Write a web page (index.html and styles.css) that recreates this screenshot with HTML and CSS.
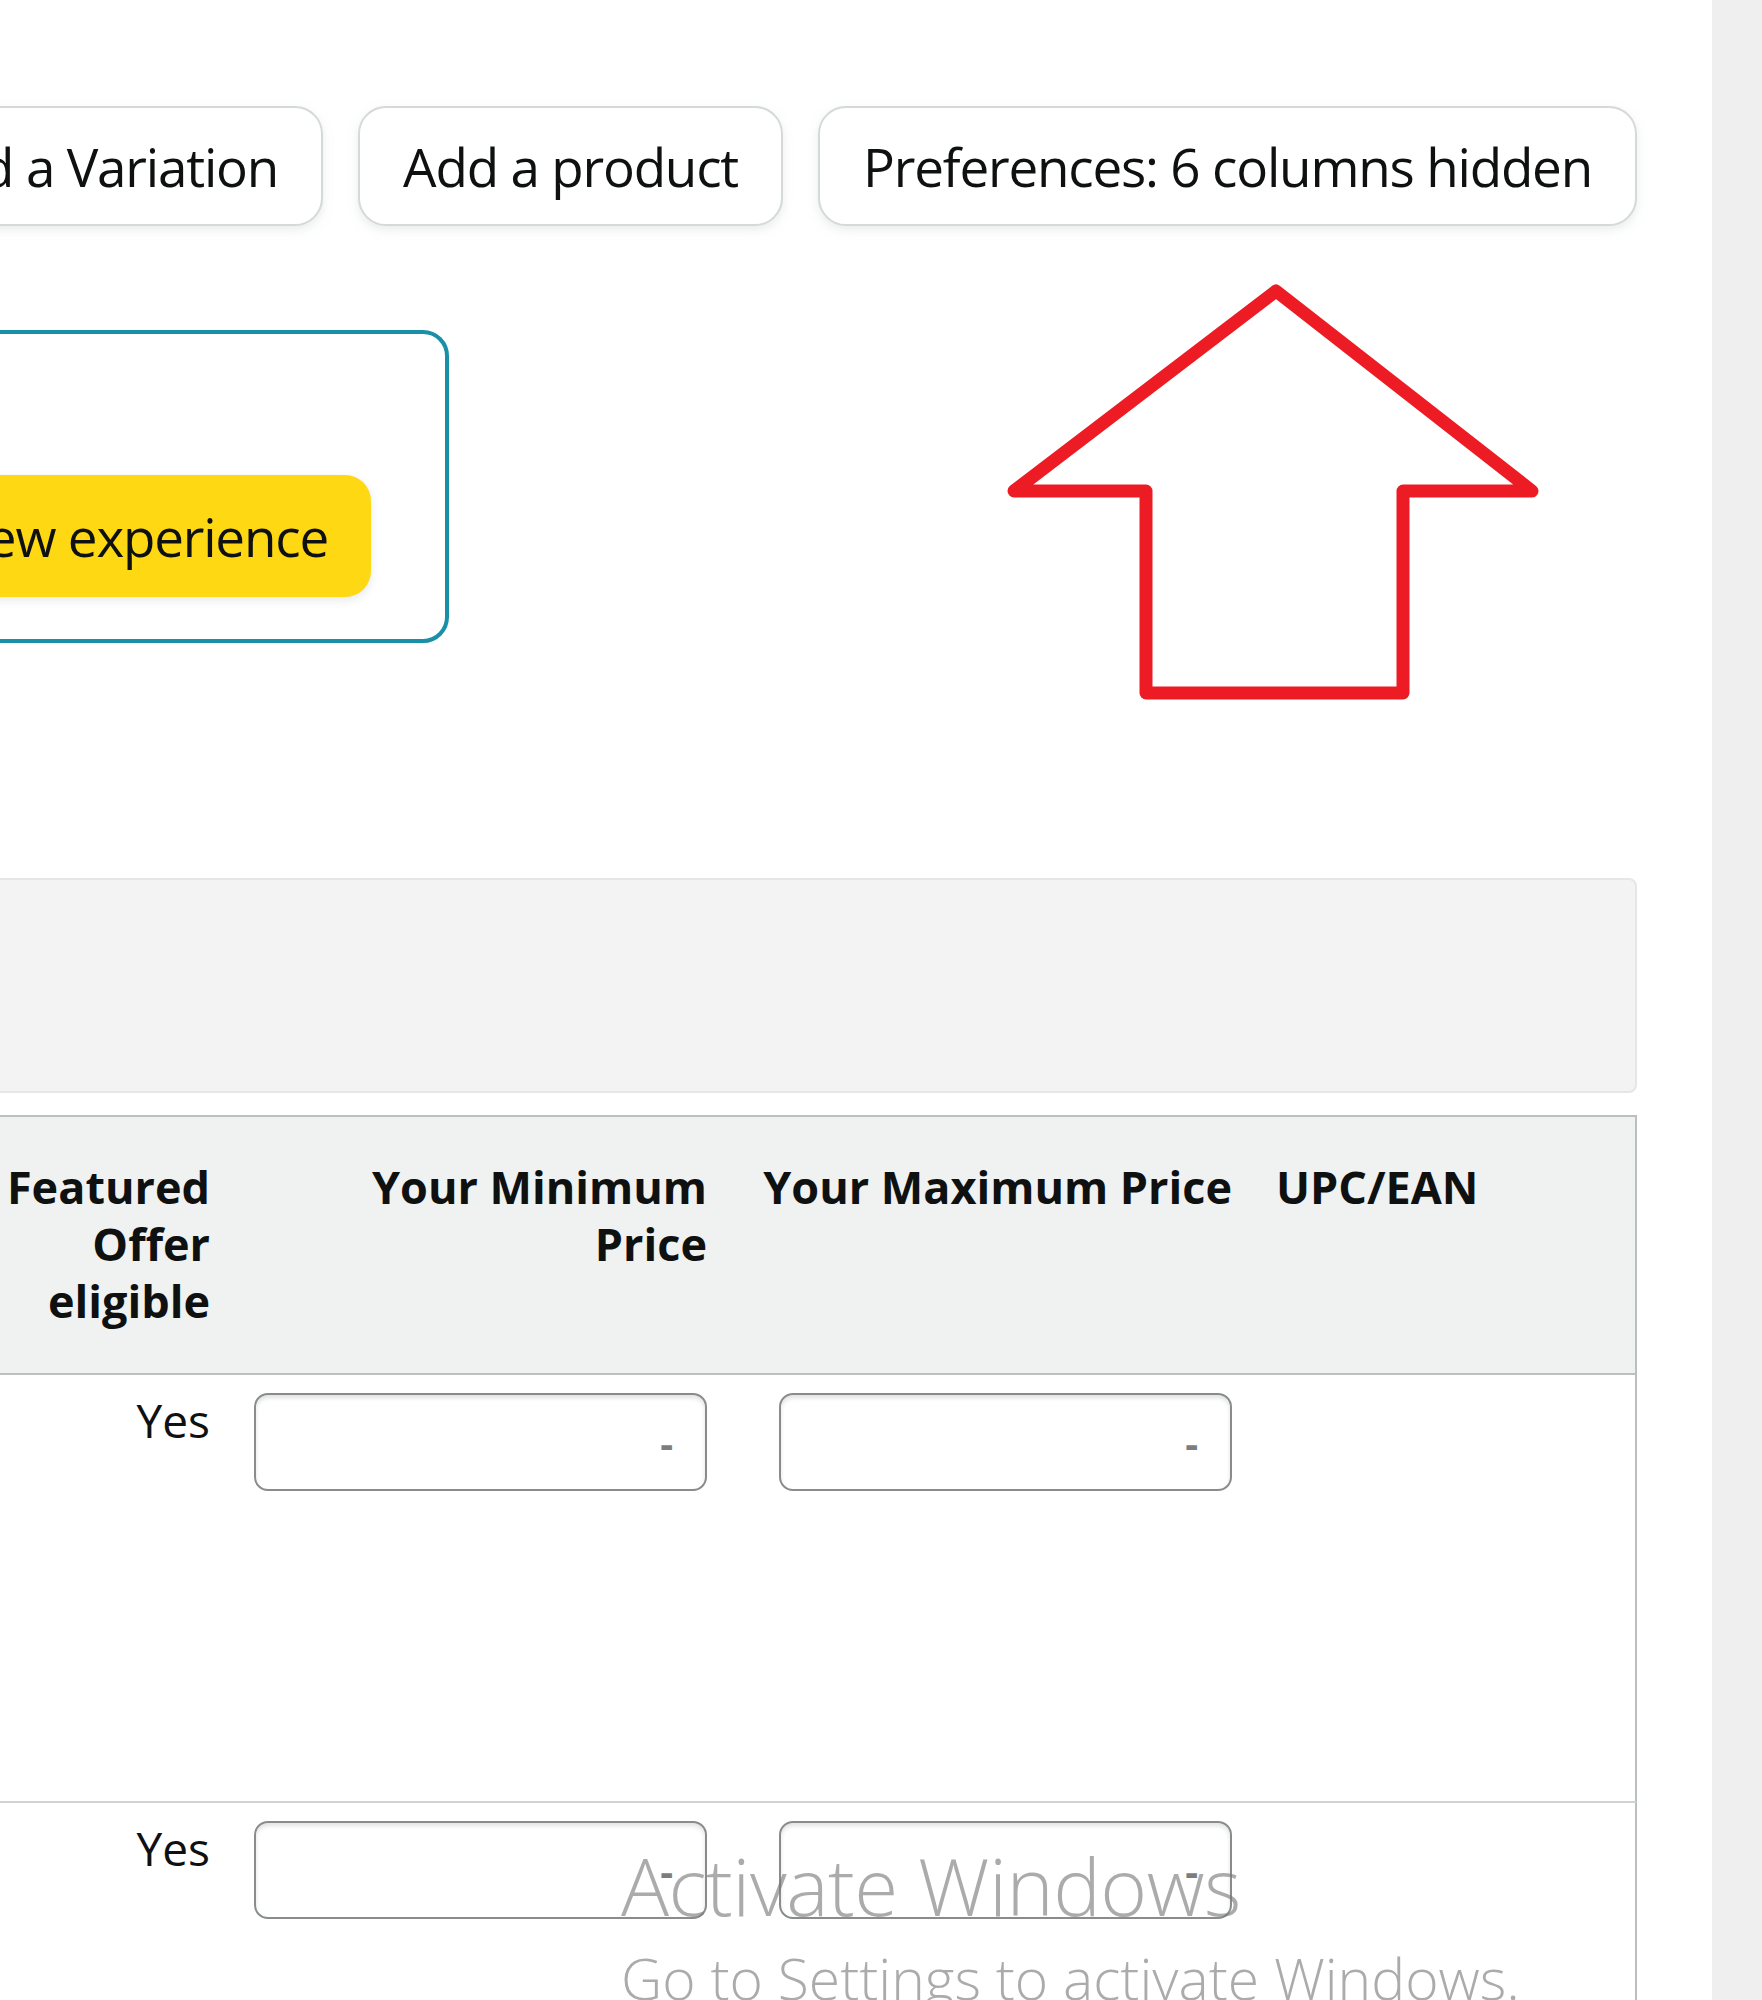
FILE: index.html
```html
<!DOCTYPE html>
<html lang="en">
<head>
  <meta charset="UTF-8" />
  <meta name="viewport" content="width=device-width, initial-scale=1.0"/>
  <title>Manage Inventory</title>
  <link rel="stylesheet" href="styles.css">
</head>
<body>
  <div class="page">
    <main class="main">
      <div class="content">
        <div class="toolbar">
          <button class="btn">Add a Variation</button>
          <button class="btn">Add a product</button>
          <button class="btn">Preferences: 6 columns hidden</button>
        </div>

        <div class="banner">
          <p class="banner-text">Try the new Manage All Inventory page</p>
          <button class="btn-primary">Switch to the new experience</button>
        </div>

        <div class="filters"></div>

        <table class="inventory">
          <colgroup>
            <col class="w-product">
            <col class="w-featured">
            <col class="w-min">
            <col class="w-max">
            <col class="w-upc">
          </colgroup>
          <thead>
            <tr>
              <th class="left">Product Name</th>
              <th>Featured Offer eligible</th>
              <th>Your Minimum Price</th>
              <th>Your Maximum Price</th>
              <th class="left last">UPC/EAN</th>
            </tr>
          </thead>
          <tbody>
            <tr>
              <td class="left"><div class="product-cell"></div></td>
              <td>Yes</td>
              <td><input type="text" class="price" placeholder="-"></td>
              <td><input type="text" class="price" placeholder="-"></td>
              <td class="left last"></td>
            </tr>
            <tr>
              <td class="left"><div class="product-cell"></div></td>
              <td>Yes</td>
              <td><input type="text" class="price" placeholder="-"></td>
              <td><input type="text" class="price" placeholder="-"></td>
              <td class="left last"></td>
            </tr>
          </tbody>
        </table>
      </div>
    </main>
    <div class="side"></div>

    <!-- annotation arrow pointing at the preferences button -->
    <svg class="arrow" width="1762" height="2000" viewBox="0 0 1762 2000">
      <polygon points="1276,291 1532,491 1403,491 1403,693 1146,693 1146,491 1014,491"
               fill="none" stroke="#ed1c24" stroke-width="13" stroke-linejoin="round"/>
    </svg>
  </div>

  <div class="watermark">
    <div class="wm-title">Activate Windows</div>
    <div class="wm-sub">Go to Settings to activate Windows.</div>
  </div>
</body>
</html>
```
FILE: styles.css
```css
body {
  margin: 0;
  font-family: 'Open Sans', sans-serif;
  color: #0f1111;
  background: #fff;
  overflow: hidden;
}
.page {
  position: relative;
  display: flex;
  height: 2000px;
}
.main {
  flex: 1;
  overflow: hidden;
  padding-right: 75px;
}
.content {
  margin-left: -1600px;
}
.side {
  width: 50px;
  background: #efefef;
}

/* top buttons */
.toolbar {
  display: flex;
  justify-content: flex-end;
  gap: 35px;
  padding-top: 106px;
}
.btn {
  height: 120px;
  padding: 0 43px;
  background: #fff;
  border: 2px solid #d5d9d9;
  border-radius: 28px;
  box-shadow: 0 4px 10px rgba(213,217,217,0.5);
  font-family: 'Open Sans', sans-serif;
  font-size: 53px;
  letter-spacing: -1.2px;
  color: #0f1111;
  white-space: nowrap;
}

/* new experience banner */
.banner {
  box-sizing: border-box;
  width: 2049px;
  height: 313px;
  margin-top: 104px;
  display: flex;
  justify-content: space-between;
  align-items: flex-end;
  padding: 0 74px 42px 60px;
  border: 4px solid #1890a8;
  border-radius: 26px;
}
.banner-text {
  margin: 0 0 30px;
  font-size: 46px;
}
.btn-primary {
  height: 122px;
  padding: 0 43px;
  background: #ffd814;
  border: none;
  border-radius: 26px;
  box-shadow: 0 3px 10px rgba(213,217,217,0.6);
  font-family: 'Open Sans', sans-serif;
  font-size: 53px;
  letter-spacing: -1.2px;
  color: #0f1111;
  white-space: nowrap;
}

.filters {
  box-sizing: border-box;
  height: 215px;
  margin-top: 235px;
  background: #f3f3f3;
  border: 2px solid #e6e6e6;
  border-radius: 8px;
}

/* inventory table */
.inventory {
  width: 100%;
  margin-top: 22px;
  table-layout: fixed;
  border-collapse: separate;
  border-spacing: 0;
}
.w-product { width: 1580px; }
.w-featured { width: 252px; }
.w-min { width: 497px; }
.w-max { width: 525px; }
.w-upc { width: 383px; }

.inventory th {
  padding: 41px 22px 44px;
  background: #f0f2f2;
  border-top: 2px solid #bbbfbf;
  border-bottom: 2px solid #bbbfbf;
  font-size: 45px;
  line-height: 57px;
  font-weight: 700;
  text-align: right;
  vertical-align: top;
}
.inventory td {
  padding: 18px 22px;
  border-bottom: 2px solid #d0d3d3;
  font-size: 46px;
  line-height: 54px;
  text-align: right;
  vertical-align: top;
}
.inventory .left { text-align: left; }
.inventory .last { border-right: 2px solid #bbbfbf; }
.product-cell { height: 390px; }

.price {
  display: block;
  box-sizing: border-box;
  width: 453px;
  height: 98px;
  margin-left: auto;
  padding: 0 32px;
  border: 2px solid #888c8c;
  border-radius: 14px;
  box-shadow: inset 0 3px 4px rgba(15,17,17,0.12);
  font-family: 'Open Sans', sans-serif;
  font-size: 40px;
  font-weight: 700;
  text-align: right;
}
.price::placeholder {
  color: #7a7e7e;
}

.arrow {
  position: absolute;
  left: 0;
  top: 0;
  pointer-events: none;
}

.watermark {
  position: fixed;
  left: 621px;
  top: 1830px;
  color: rgba(120,120,120,0.62);
  font-weight: 300;
  pointer-events: none;
}
.wm-title {
  font-size: 80px;
  letter-spacing: -0.5px;
}
.wm-sub {
  font-size: 57px;
  letter-spacing: 0;
}
```
